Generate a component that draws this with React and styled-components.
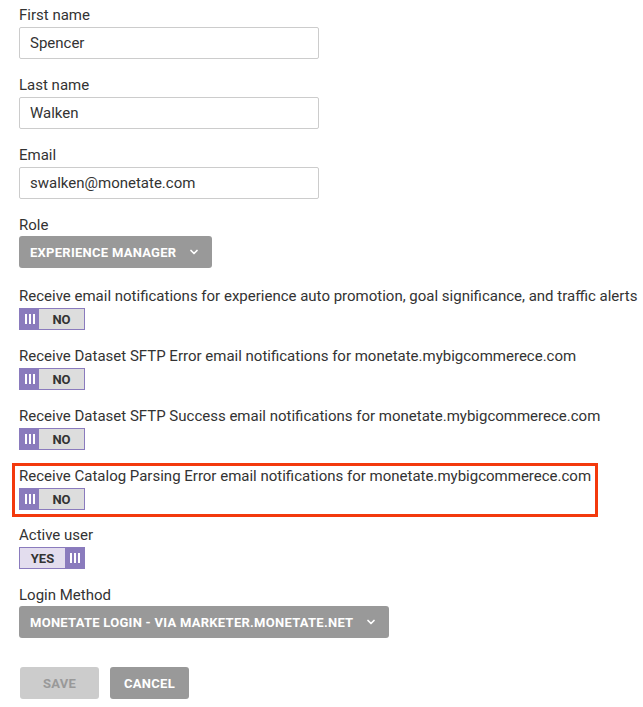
import styled, { createGlobalStyle } from 'styled-components';
import { ChevronDown } from 'lucide-react';


const GlobalStyle = createGlobalStyle`
    body {
        margin: 0;
        background: #fff;
        font-family: Roboto, "Liberation Sans", sans-serif;
        color: #333;
    }
`;

const StyledPage = styled.div`
    display: flex;
    flex-direction: column;
    align-items: flex-start;
    padding: 5px 0 8px 19px;
`;
const StyledField = styled.div`
    display: flex;
    flex-direction: column;
    align-items: flex-start;
    gap: ${({gap}) => gap ?? 2}px;
    margin-bottom: ${({space}) => space ?? 16}px;
`;
const StyledHighlight = styled.div`
    display: flex;
    flex-direction: column;
    align-items: flex-start;
    gap: 2px;
    margin: -3px 0 8px -7px;
    padding: 0 4px 4px 4px;
    border: 3px solid #f3390d;
`;
const StyledLabel = styled.label`
    font-size: 15px;
    line-height: 20px;
    color: #333;
    white-space: nowrap;
`;
const StyledInput = styled.input`
    box-sizing: border-box;
    width: 300px;
    height: 32px;
    padding: 0 10px;
    border: 1px solid #ccc;
    border-radius: 2px;
    font-family: inherit;
    font-size: 15px;
    color: #333;
    outline: none;
`;
const StyledSelect = styled.button`
    display: flex;
    align-items: center;
    gap: 12px;
    height: 32px;
    padding: 0 12px 0 11px;
    border: none;
    border-radius: 3px;
    background: #999;
    color: #fff;
    font-family: inherit;
    font-size: 13px;
    font-weight: 700;
    letter-spacing: 0.27px;
    text-transform: uppercase;
`;
const StyledActions = styled.div`
    display: flex;
    gap: 11px;
    margin-top: 13px;
    margin-left: 1px;
`;
const StyledButton = styled.button`
    width: 79px;
    height: 32px;
    border: none;
    border-radius: 3px;
    background: ${({disabled}) => disabled ? '#ccc' : '#999'};
    color: ${({disabled}) => disabled ? '#999' : '#fff'};
    font-family: inherit;
    font-size: 13px;
    font-weight: 700;
    letter-spacing: 0.27px;
`;
const StyledToggle = styled.div`
    display: flex;
    flex-direction: ${({on}) => on ? 'row-reverse' : 'row'};
    box-sizing: border-box;
    width: 66px;
    height: 22px;
    border: 1px solid #8a7bbd;
    background: ${({on}) => on ? '#e3ddee' : '#ddd'};
`;
const StyledHandle = styled.div`
    display: flex;
    align-items: center;
    justify-content: center;
    gap: 2px;
    width: 19px;
    background: #8a7bbd;
`;
const StyledHandleBar = styled.span`
    width: 2px;
    height: 10px;
    background: #fff;
`;
const StyledToggleText = styled.span`
    flex: 1;
    display: flex;
    align-items: center;
    justify-content: center;
    font-size: 13px;
    font-weight: 700;
    color: #333;
`;


const Toggle = ({on}) => (
    <StyledToggle on={on}>
        <StyledHandle>
            <StyledHandleBar/>
            <StyledHandleBar/>
            <StyledHandleBar/>
        </StyledHandle>
        <StyledToggleText>{on ? 'YES' : 'NO'}</StyledToggleText>
    </StyledToggle>
);

const notifications = [
    'Receive email notifications for experience auto promotion, goal significance, and traffic alerts',
    'Receive Dataset SFTP Error email notifications for monetate.mybigcommerece.com',
    'Receive Dataset SFTP Success email notifications for monetate.mybigcommerece.com',
];

const App = () => (
    <StyledPage>
        <GlobalStyle/>
        <StyledField>
            <StyledLabel>First name</StyledLabel>
            <StyledInput defaultValue="Spencer"/>
        </StyledField>
        <StyledField>
            <StyledLabel>Last name</StyledLabel>
            <StyledInput defaultValue="Walken"/>
        </StyledField>
        <StyledField>
            <StyledLabel>Email</StyledLabel>
            <StyledInput defaultValue="swalken@monetate.com"/>
        </StyledField>
        <StyledField gap={1} space={18}>
            <StyledLabel>Role</StyledLabel>
            <StyledSelect>
                Experience Manager
                <ChevronDown size={12} strokeWidth={3.5}/>
            </StyledSelect>
        </StyledField>
        {notifications.map((text) => (
            <StyledField key={text}>
                <StyledLabel>{text}</StyledLabel>
                <Toggle/>
            </StyledField>
        ))}
        <StyledHighlight>
            <StyledLabel>
                Receive Catalog Parsing Error email notifications for monetate.mybigcommerece.com
            </StyledLabel>
            <Toggle/>
        </StyledHighlight>
        <StyledField>
            <StyledLabel>Active user</StyledLabel>
            <Toggle on/>
        </StyledField>
        <StyledField gap={1}>
            <StyledLabel>Login Method</StyledLabel>
            <StyledSelect>
                Monetate Login - via marketer.monetate.net
                <ChevronDown size={12} strokeWidth={3.5}/>
            </StyledSelect>
        </StyledField>
        <StyledActions>
            <StyledButton disabled>SAVE</StyledButton>
            <StyledButton>CANCEL</StyledButton>
        </StyledActions>
    </StyledPage>
);

export default App;
